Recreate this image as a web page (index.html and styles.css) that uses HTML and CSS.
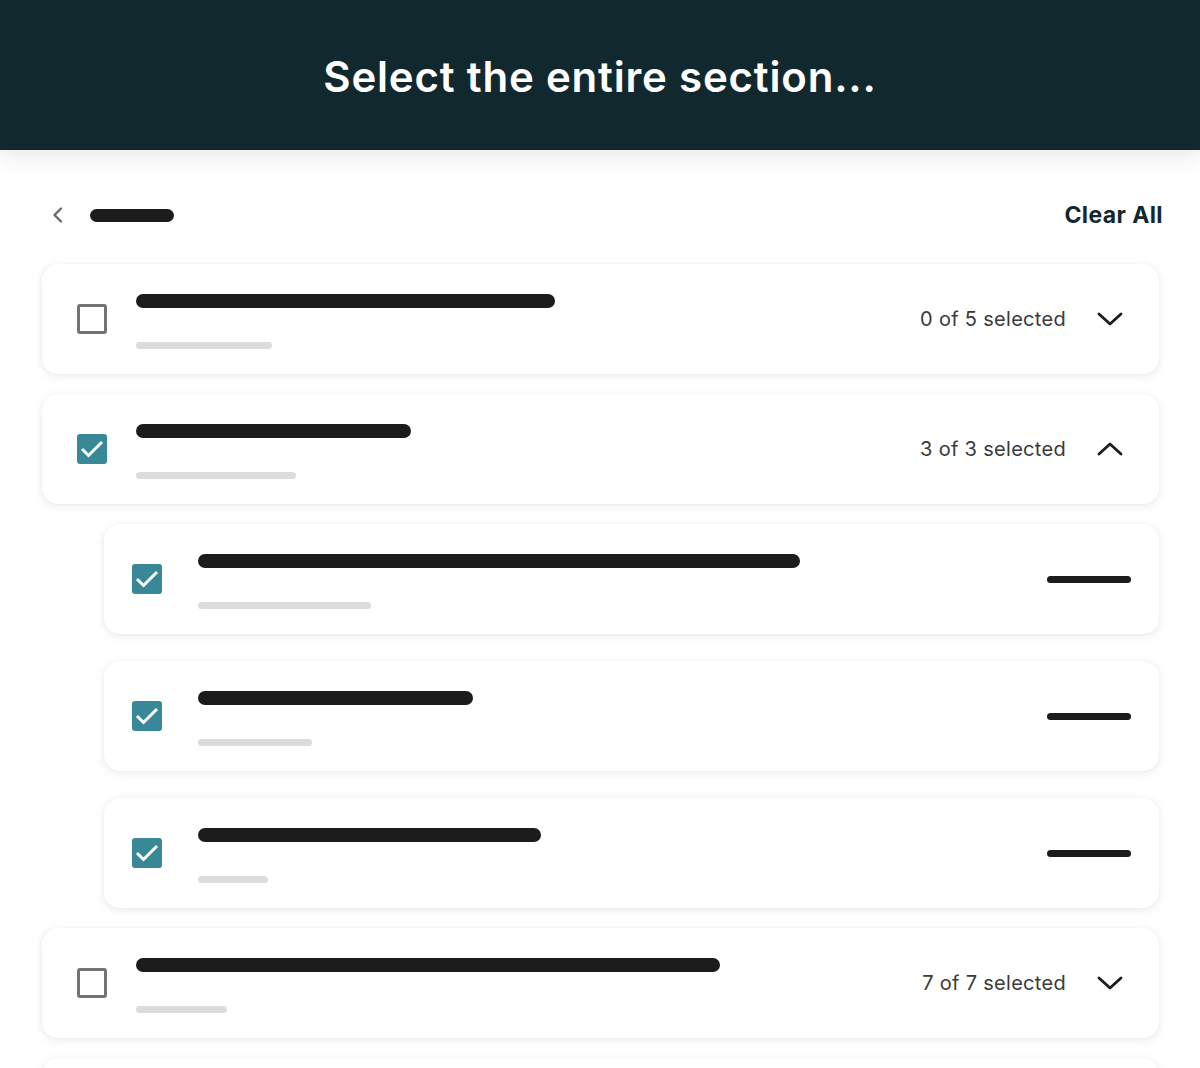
FILE: index.html
```html
<!DOCTYPE html>
<html lang="en">
<head>
<meta charset="utf-8">
<title>Select the entire section</title>
<link rel="stylesheet" href="styles.css">
</head>
<body>
<header class="hero">
  <h1 class="hero-title">Select the entire section...</h1>
</header>
<main class="main">
  <div class="topbar">
    <div class="topbar-left">
      <svg class="back" width="14" height="18" viewBox="0 0 14 18"><path d="M11 2.5 L4.5 9 L11 15.5" fill="none" stroke="#6b6b6b" stroke-width="2.4" stroke-linecap="round" stroke-linejoin="round"/></svg>
      <span class="crumb"></span>
    </div>
    <button class="clear">Clear All</button>
  </div>

  <div class="list">
    <div class="card section">
      <span class="cb"></span>
      <div class="bars">
        <span class="bar-title" style="width:419px"></span>
        <span class="bar-sub" style="width:136px"></span>
      </div>
      <span class="count">0 of 5 selected</span>
      <svg class="chev" width="26" height="16" viewBox="0 0 26 16"><path d="M2 3 L13 13 L24 3" fill="none" stroke="#1c1c1c" stroke-width="2.8" stroke-linecap="round" stroke-linejoin="round"/></svg>
    </div>

    <div class="card section">
      <span class="cb cb-on"><svg width="30" height="30" viewBox="0 0 30 30"><path d="M5 15 L11.5 21.5 L25 8" fill="none" stroke="#fff" stroke-width="3"/></svg></span>
      <div class="bars">
        <span class="bar-title" style="width:275px"></span>
        <span class="bar-sub" style="width:160px"></span>
      </div>
      <span class="count">3 of 3 selected</span>
      <svg class="chev" width="26" height="16" viewBox="0 0 26 16"><path d="M2 13 L13 3 L24 13" fill="none" stroke="#1c1c1c" stroke-width="2.8" stroke-linecap="round" stroke-linejoin="round"/></svg>
    </div>

    <div class="children">
      <div class="card child">
        <span class="cb cb-on"><svg width="30" height="30" viewBox="0 0 30 30"><path d="M5 15 L11.5 21.5 L25 8" fill="none" stroke="#fff" stroke-width="3"/></svg></span>
        <div class="bars">
          <span class="bar-title" style="width:602px"></span>
          <span class="bar-sub" style="width:173px"></span>
        </div>
        <span class="dash"></span>
      </div>
      <div class="card child">
        <span class="cb cb-on"><svg width="30" height="30" viewBox="0 0 30 30"><path d="M5 15 L11.5 21.5 L25 8" fill="none" stroke="#fff" stroke-width="3"/></svg></span>
        <div class="bars">
          <span class="bar-title" style="width:275px"></span>
          <span class="bar-sub" style="width:114px"></span>
        </div>
        <span class="dash"></span>
      </div>
      <div class="card child">
        <span class="cb cb-on"><svg width="30" height="30" viewBox="0 0 30 30"><path d="M5 15 L11.5 21.5 L25 8" fill="none" stroke="#fff" stroke-width="3"/></svg></span>
        <div class="bars">
          <span class="bar-title" style="width:343px"></span>
          <span class="bar-sub" style="width:70px"></span>
        </div>
        <span class="dash"></span>
      </div>
    </div>

    <div class="card section">
      <span class="cb"></span>
      <div class="bars">
        <span class="bar-title" style="width:584px"></span>
        <span class="bar-sub" style="width:91px"></span>
      </div>
      <span class="count">7 of 7 selected</span>
      <svg class="chev" width="26" height="16" viewBox="0 0 26 16"><path d="M2 3 L13 13 L24 3" fill="none" stroke="#1c1c1c" stroke-width="2.8" stroke-linecap="round" stroke-linejoin="round"/></svg>
    </div>

    <div class="card section">
      <span class="cb"></span>
      <div class="bars">
        <span class="bar-title" style="width:360px"></span>
        <span class="bar-sub" style="width:120px"></span>
      </div>
    </div>
  </div>
</main>
</body>
</html>
```

FILE: styles.css
```css
* { box-sizing: border-box; }

html, body {
  margin: 0;
  padding: 0;
  background: #ffffff;
  font-family: Inter, "Noto Sans", "Liberation Sans", sans-serif;
}

body {
  height: 1068px;
  overflow: hidden;
}

.hero {
  height: 150px;
  background: #12282f;
  display: flex;
  align-items: center;
  justify-content: center;
  box-shadow: 0 6px 22px rgba(0, 0, 0, 0.10);
  position: relative;
  z-index: 1;
}

.hero-title {
  margin: 0;
  color: #ffffff;
  font-size: 42px;
  font-weight: 600;
  letter-spacing: 0.8px;
  line-height: 1;
  padding-top: 4px;
}

.main {
  padding: 40px 41px 0 42px;
}

.topbar {
  height: 50px;
  display: flex;
  align-items: center;
  justify-content: space-between;
  margin: 0 -4px 0 8px;
}

.topbar-left {
  display: flex;
  align-items: center;
  gap: 26px;
}

.back {
  display: block;
}

.crumb {
  display: block;
  width: 84px;
  height: 13px;
  border-radius: 7px;
  background: #1c1c1c;
}

.clear {
  border: 0;
  background: none;
  padding: 0;
  font-family: Inter, "Noto Sans", "Liberation Sans", sans-serif;
  font-size: 23px;
  font-weight: 700;
  letter-spacing: 0.4px;
  color: #12282f;
  cursor: pointer;
}

.list {
  margin-top: 24px;
  display: flex;
  flex-direction: column;
  gap: 20px;
}

.children {
  display: flex;
  flex-direction: column;
  gap: 27px;
  padding-left: 62px;
}

.card {
  height: 110px;
  background: #ffffff;
  border-radius: 16px;
  box-shadow: 0 2px 10px rgba(0, 0, 0, 0.09), 0 0 2px rgba(0, 0, 0, 0.04);
  display: flex;
  align-items: center;
}

.section {
  padding: 0 36px 0 35px;
}

.child {
  padding: 0 28px 0 28px;
}

.cb {
  flex: none;
  width: 30px;
  height: 30px;
  border: 3px solid #737373;
  border-radius: 3px;
  background: #ffffff;
  display: block;
}

.cb-on {
  border: 0;
  background: #388897;
}

.cb-on svg {
  display: block;
}

.bars {
  display: flex;
  flex-direction: column;
  gap: 34px;
  margin-top: 4px;
  margin-left: 29px;
  flex: 1;
}

.child .bars {
  margin-left: 36px;
}

.bar-title {
  display: block;
  height: 14px;
  border-radius: 7px;
  background: #1c1c1c;
}

.bar-sub {
  display: block;
  height: 7px;
  border-radius: 4px;
  background: #dcdcdc;
}

.count {
  font-size: 20px;
  font-weight: 400;
  color: #3a3a3a;
  letter-spacing: 0.3px;
  margin-right: 31px;
}

.chev {
  display: block;
  flex: none;
  margin-top: -1px;
}

.dash {
  display: block;
  width: 84px;
  height: 7px;
  border-radius: 4px;
  background: #1c1c1c;
  margin-top: 1px;
}
```
